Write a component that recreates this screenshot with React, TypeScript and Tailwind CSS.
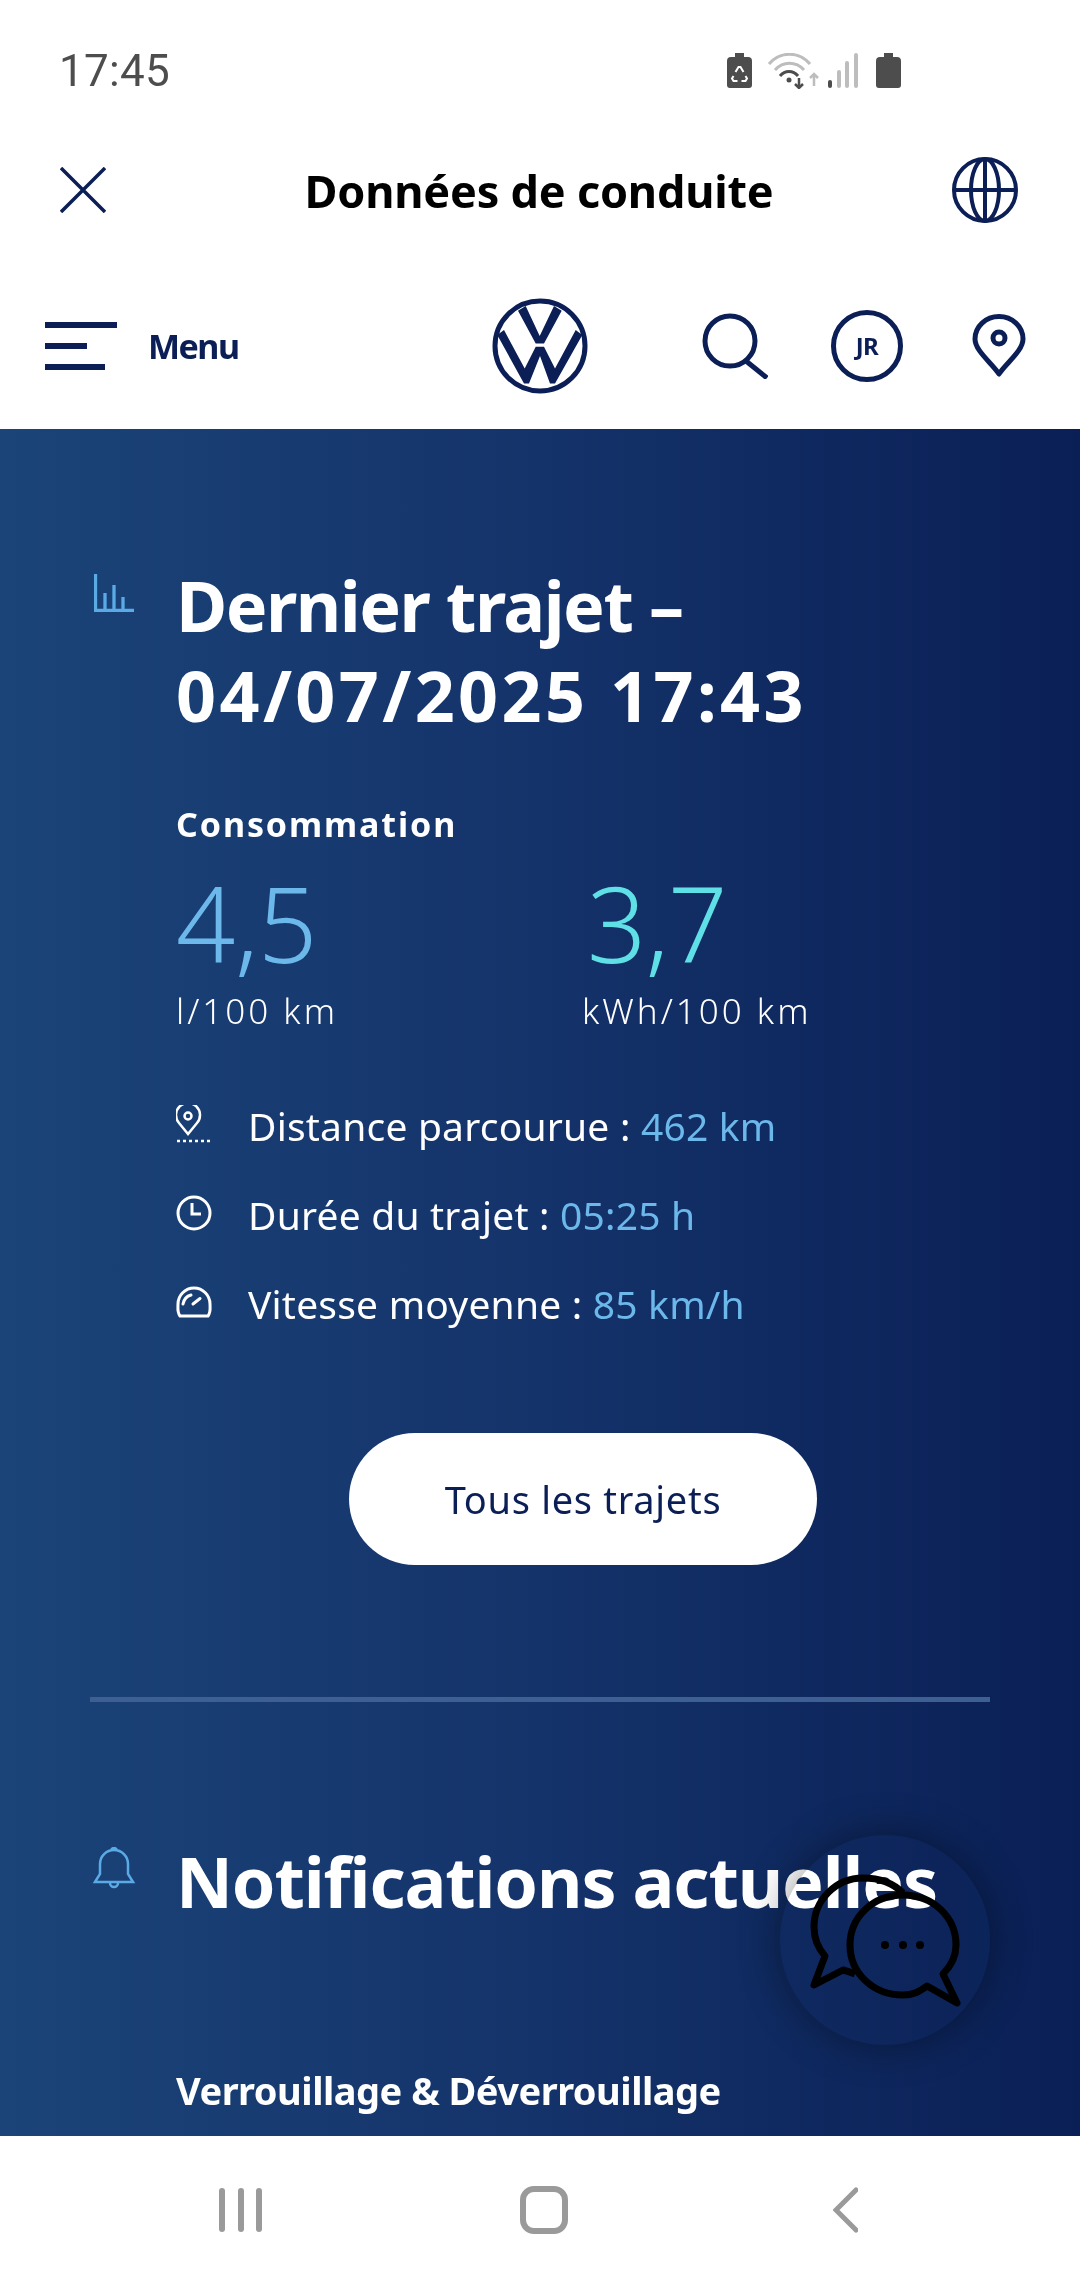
const sans = "font-['Noto_Sans','Lato',sans-serif]"

const StatusIcons = () => (
  <svg width="174" height="36" viewBox="0 0 174 36">
    <path d="M4 4h4V0h9v4h4a4 4 0 0 1 4 4v24a3 3 0 0 1-3 3H3a3 3 0 0 1-3-3V8a4 4 0 0 1 4-4z" fill="#4d4d4d" />
    <path d="M8.500 19l3-5h2l3 5M6.500 23l-1.500 2.500 1.500 2.500h4M14.500 28h4l1.500-2.500-1.500-2.500" fill="none" stroke="#fff" strokeWidth="2" />
    <path d="M42 11C53 -2 72 -2 83 11" fill="none" stroke="#bdbdbd" strokeWidth="3" />
    <path d="M48 17C56 8 69 8 77 17" fill="none" stroke="#bdbdbd" strokeWidth="3" />
    <path d="M53 23C58 17 66 17 71 23" fill="none" stroke="#4d4d4d" strokeWidth="3" />
    <circle cx="62" cy="27" r="2.500" fill="#4d4d4d" />
    <path d="M72 25v10M68 31l4 4 4-4" fill="none" stroke="#4d4d4d" strokeWidth="2.500" />
    <path d="M87 33V21M83 25l4-4 4 4" fill="none" stroke="#bdbdbd" strokeWidth="2.500" />
    <rect x="101" y="27" width="4" height="8" rx="2" fill="#4d4d4d" />
    <rect x="110" y="17" width="4" height="18" rx="2" fill="#bdbdbd" />
    <rect x="118" y="8" width="4" height="27" rx="2" fill="#bdbdbd" />
    <rect x="127" y="0" width="4" height="35" rx="2" fill="#bdbdbd" />
    <path d="M153 4h4V0h9v4h4a4 4 0 0 1 4 4v24a3 3 0 0 1-3 3h-19a3 3 0 0 1-3-3V8a4 4 0 0 1 4-4z" fill="#4d4d4d" />
  </svg>
)

const VwLogo = () => (
  <svg width="96" height="96" viewBox="0 0 96 96">
    <circle cx="48" cy="48" r="45" fill="none" stroke="#0b1f56" strokeWidth="5" />
    <path d="M26 12.700L33.700 8 47.700 38 62 8 69.700 12.700 52 45.400H43.700z" fill="#0b1f56" />
    <path d="M5.300 37L12 32 32.700 70.400 43.700 48.700H52L63 70.400 83.700 32 90.300 37 63 85.400H58L48 58 37 85.400H32z" fill="#0b1f56" />
  </svg>
)

const Stat = ({ icon, label, value }: { icon: React.ReactNode; label: string; value: string }) => (
  <div className="flex items-center h-[89px]">
    <div className="w-[72px] shrink-0 -mt-[6px]">{icon}</div>
    <p className="text-[39px] text-white tracking-[0.2px]">
      {label} : <span className="text-[#6cb8ea]">{value}</span>
    </p>
  </div>
)

const App = () => {
  return (
    <div className={`relative w-[1080px] h-[2280px] overflow-hidden bg-white flex flex-col ${sans}`}>
      {/* status bar */}
      <div className="h-[130px] shrink-0 flex items-center justify-between pl-[59px] pr-[179px] pt-[12px]">
        <span className="font-['Roboto',sans-serif] text-[44px] text-[#4d4d4d] tracking-[0.3px]">17:45</span>
        <StatusIcons />
      </div>

      {/* title row */}
      <div className="h-[120px] shrink-0 grid grid-cols-[1fr_auto_1fr] items-center pl-[60px] pr-[62px]">
        <svg width="46" height="46" viewBox="0 0 46 46" stroke="#0b1f56" strokeWidth="3.500">
          <path d="M1 1l44 44M45 1L1 45" />
        </svg>
        <h1 className="text-[45px] font-bold text-black leading-none tracking-[-0.2px]">Données de conduite</h1>
        <svg width="66" height="66" viewBox="0 0 66 66" fill="none" stroke="#0b1f56" strokeWidth="4" className="justify-self-end">
          <circle cx="33" cy="33" r="31" />
          <ellipse cx="33" cy="33" rx="14" ry="31" />
          <path d="M33 2v62M2 33h62" />
        </svg>
      </div>

      {/* nav row */}
      <div className="h-[179px] shrink-0 flex items-center pl-[45px] pr-[53px] pt-[12px]">
        <div className="flex items-center gap-[31px] w-[447px]">
          <div className="flex flex-col gap-[15px] w-[72px]">
            <div className="h-[6px] w-[72px] bg-[#0b1f56]" />
            <div className="h-[6px] w-[42px] bg-[#0b1f56]" />
            <div className="h-[6px] w-[60px] bg-[#0b1f56]" />
          </div>
          <span className="text-[34px] font-bold text-[#0b1f56] tracking-[-1.5px] mt-[2px]">Menu</span>
        </div>
        <VwLogo />
        <div className="flex items-center ml-auto -translate-x-[1px]">
          <svg width="66" height="66" viewBox="0 0 66 66" fill="none" stroke="#0b1f56" strokeWidth="5" className="mr-[63px]">
            <circle cx="28" cy="28" r="25" />
            <path d="M44 48l21 17" />
          </svg>
          <div className="w-[72px] h-[72px] rounded-full border-[5px] border-[#0b1f56] flex items-center justify-center text-[24px] font-bold text-[#0b1f56] tracking-[-0.5px] mr-[69px]">
            JR
          </div>
          <svg width="54" height="64" viewBox="0 0 54 64" fill="none" stroke="#0b1f56" strokeWidth="5">
            <path d="M27 60C20 49 3 37 3 25A24 22.500 0 1 1 51 25C51 37 34 49 27 60Z" strokeLinejoin="round" />
            <circle cx="27" cy="24" r="6" />
          </svg>
        </div>
      </div>

      {/* main panel */}
      <main className="relative flex-1 overflow-hidden bg-gradient-to-r from-[#1b4478] via-[#14336a] to-[#0a1f55] pl-[90px] pr-[90px]">
        <section className="flex pt-[131px]">
          <div className="w-[86px] shrink-0">
            <svg width="40" height="38" viewBox="0 0 40 38" fill="none" stroke="#5aaae6" strokeWidth="3.300" className="mt-[14px] ml-[4px]">
              <path d="M1.500 0v36.500h38.500M11 36V19M20 36V11M29 36V23" />
            </svg>
          </div>
          <h2 className="text-[70px] font-bold text-white leading-[90px] tracking-[-1.5px]">
            Dernier trajet –<br />
            <span className="tracking-[3.400px]">04/07/2025 17:43</span>
          </h2>
        </section>

        <section className="pl-[86px] pt-[61px]">
          <h3 className="text-[34px] font-bold text-white tracking-[1.9px] leading-[46px]">Consommation</h3>
          <div className="flex mt-[24px]">
            <div className="w-[406px]">
              <div className="text-[104px] font-light text-[#6cb8ea] leading-[104px] tracking-[-0.5px]">4,5</div>
              <div className="text-[35px] font-light text-white tracking-[3px] leading-[40px] mt-[16px]">l/100 km</div>
            </div>
            <div>
              <div className="text-[104px] font-light text-[#5fdfe6] leading-[104px] pl-[5px] tracking-[-1px]">3,7</div>
              <div className="text-[35px] font-light text-white tracking-[3px] leading-[40px] mt-[16px]">kWh/100 km</div>
            </div>
          </div>
          <div className="mt-[51px]">
            <Stat
              label="Distance parcourue"
              value="462 km"
              icon={
                <svg width="36" height="38" viewBox="0 0 36 38" fill="none" stroke="#fff" strokeWidth="2.500">
                  <path d="M12 29L3 18a12 12 0 1 1 18 0z" />
                  <circle cx="12" cy="11" r="3.500" />
                  <path d="M1 36h34" strokeDasharray="3 3" />
                </svg>
              }
            />
            <Stat
              label="Durée du trajet"
              value="05:25 h"
              icon={
                <svg width="36" height="36" viewBox="0 0 36 36" fill="none" stroke="#fff" strokeWidth="3">
                  <circle cx="18" cy="18" r="16" />
                  <path d="M16 8v11h9" />
                </svg>
              }
            />
            <Stat
              label="Vitesse moyenne"
              value="85 km/h"
              icon={
                <svg width="36" height="32" viewBox="0 0 36 32" fill="none" stroke="#fff" strokeWidth="3">
                  <path d="M4 30C1 26 2 22 2 18a16 16 0 0 1 32 0c0 4 1 8-2 12z" />
                  <path d="M7 18C8 13 11 10 15 9M17 18l7-5.500" strokeLinecap="round" />
                </svg>
              }
            />
          </div>
        </section>

        <div className="flex pl-[259px] mt-[84px]">
          <button className="w-[468px] h-[132px] rounded-full bg-white text-[38px] text-[#0b1f56] tracking-[0.7px]">
            Tous les trajets
          </button>
        </div>

        <div className="h-[5px] bg-[#3d5f92] mt-[132px]" />

        <section className="flex pt-[134px]">
          <div className="w-[86px] shrink-0">
            <svg width="44" height="44" viewBox="0 0 44 44" fill="none" stroke="#5aaae6" strokeWidth="2.500" className="mt-[11px] ml-[2px]">
              <path d="M3 35l5-8V17a14 14 0 0 1 28 0v10l5 8zM19 4a3 3 0 0 1 6 0M18 36a4 4 0 0 0 8 0" />
            </svg>
          </div>
          <h2 className="text-[70px] font-bold text-white leading-[90px] whitespace-nowrap tracking-[-1.1px]">Notifications actuelles</h2>
        </section>

        <h3 className="pl-[86px] pt-[136px] text-[38px] font-bold text-white tracking-[-0.5px]">Verrouillage &amp; Déverrouillage</h3>

        {/* chat button: the disc lightens only the dark panel, so the heading stays white through it */}
        <div className="absolute left-[780px] top-[1406px] w-[210px] h-[210px]">
          <div className="absolute inset-0 rounded-full shadow-[0_0_40px_rgba(0,0,0,0.4)]" />
          <div className="absolute inset-0 rounded-full bg-[#0b2459] mix-blend-lighten" />
          <svg width="240" height="240" viewBox="0 0 240 240" fill="none" stroke="#000" strokeWidth="7" strokeLinejoin="round" className="absolute -left-[10px] -top-[15px]">
            <path d="M133 73C122 62 108 58 93 58 66 58 44 80 44 107 44 118 48 128 55 136L44 165 73 150C77 151 80 152 85 154" />
            <path d="M173 154L187 183 157 166C149 172 143 175 133 175 103 175 80 153 80 125 80 97 103 75 133 75 163 75 186 97 186 125 186 136 181 146 173 154Z" />
            <circle cx="115" cy="125" r="4" fill="#000" stroke="none" />
            <circle cx="133" cy="125" r="4" fill="#000" stroke="none" />
            <circle cx="150" cy="125" r="4" fill="#000" stroke="none" />
          </svg>
        </div>
      </main>

      {/* android nav bar */}
      <div className="h-[144px] shrink-0 flex items-center justify-between pl-[219px] pr-[222px] pt-[4px]">
        <div className="flex gap-[12.500px]">
          <div className="w-[6px] h-[44px] rounded-full bg-[#9a9a9a]" />
          <div className="w-[6px] h-[44px] rounded-full bg-[#9a9a9a]" />
          <div className="w-[6px] h-[44px] rounded-full bg-[#9a9a9a]" />
        </div>
        <div className="w-[48px] h-[48px] rounded-[14px] border-[6px] border-[#9a9a9a] mr-[8px]" />
        <svg width="25" height="46" viewBox="0 0 25 46" fill="none" stroke="#9a9a9a" strokeWidth="5" strokeLinecap="round">
          <path d="M23 3L3 23l20 20" />
        </svg>
      </div>
    </div>
  )
}

export default App
